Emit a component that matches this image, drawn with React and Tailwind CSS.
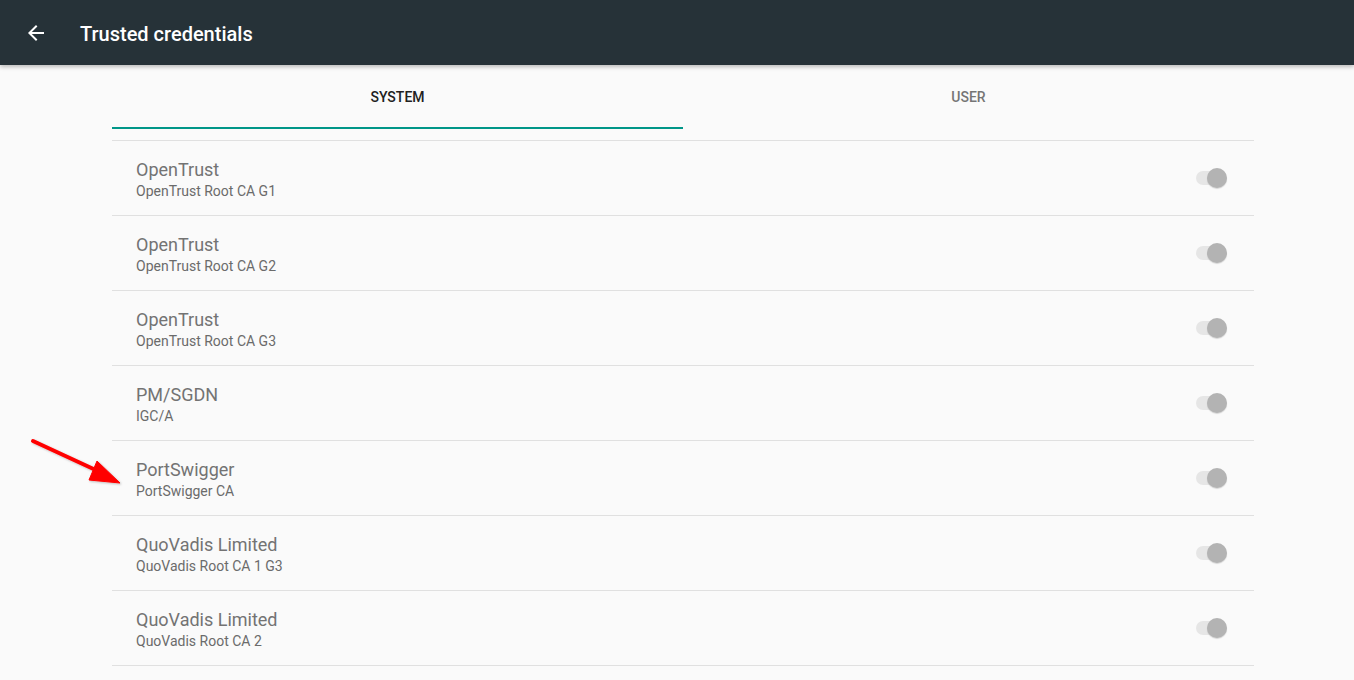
import { useState } from 'react';

const CERTS = [
  { org: 'OpenTrust', name: 'OpenTrust Root CA G1' },
  { org: 'OpenTrust', name: 'OpenTrust Root CA G2' },
  { org: 'OpenTrust', name: 'OpenTrust Root CA G3' },
  { org: 'PM/SGDN', name: 'IGC/A' },
  { org: 'PortSwigger', name: 'PortSwigger CA' },
  { org: 'QuoVadis Limited', name: 'QuoVadis Root CA 1 G3' },
  { org: 'QuoVadis Limited', name: 'QuoVadis Root CA 2' },
];

const font = { fontFamily: 'Roboto, "Noto Sans", sans-serif' };

// disabled-looking switch, thumb to the right
const Toggle = () => (
  <div className="relative w-[32px] h-[20px] flex items-center">
    <div className="ml-[1px] w-[26px] h-[14px] rounded-full bg-[#e6e6e6]" />
    <div className="absolute right-0 top-0 w-[20px] h-[20px] rounded-full bg-[#b3b3b3] shadow-[0_1px_1px_rgba(0,0,0,0.15)]" />
  </div>
);

const CertRow = ({ org, name }) => (
  <div className="flex items-center border-b border-[#e0e0e0] pl-[24px] pr-[27px]">
    <div className="flex-1 pt-[19px] pb-[14px]">
      <p className="text-[18px] leading-[20px] text-[#737373]">{org}</p>
      <p className="pt-[1px] text-[14px] leading-[20px] text-[#6b6b6b]">{name}</p>
    </div>
    <Toggle />
  </div>
);

const App = () => {
  const [tab, setTab] = useState('system');

  return (
    <div className="relative w-[1354px] h-[680px] overflow-hidden bg-[#fafafa]" style={font}>
      {/* Toolbar */}
      <div className="relative z-10 h-[65px] bg-[#263238] flex items-center shadow-[0_2px_4px_rgba(0,0,0,0.25)]">
        <svg className="ml-[24px]" width="24" height="24" viewBox="0 0 24 24" fill="#ffffff">
          <path d="M20 11H7.83l5.59-5.59L12 4l-8 8 8 8 1.41-1.41L7.83 13H20v-2z" />
        </svg>
        <h1 className="ml-[32px] mt-[2px] text-[20px] font-medium text-white">Trusted credentials</h1>
      </div>

      <div className="ml-[112px] mr-[100px]">
        {/* Tabs */}
        <div className="flex h-[64px]">
          {['system', 'user'].map((t) => (
            <button
              key={t}
              onClick={() => setTab(t)}
              className={`flex-1 flex items-center justify-center border-b-2 text-[14px] font-medium uppercase ${
                tab === t ? 'border-[#009688] text-[#212121]' : 'border-transparent text-[#757575]'
              }`}
            >
              <span className="mt-[3px]">{t}</span>
            </button>
          ))}
        </div>

        {/* Certificate list */}
        <div className="mt-[11px] border-t border-[#e0e0e0]">
          {CERTS.map((c) => (
            <CertRow key={c.name} {...c} />
          ))}
        </div>
      </div>

      {/* Annotation arrow */}
      <svg className="absolute left-0 top-0 pointer-events-none" width="140" height="500" viewBox="0 0 140 500">
        <defs>
          <filter id="arrowShadow" x="-20%" y="-20%" width="140%" height="140%">
            <feDropShadow dx="1" dy="1" stdDeviation="1" floodColor="#000" floodOpacity="0.25" />
          </filter>
        </defs>
        <g filter="url(#arrowShadow)" fill="#ff0000" stroke="#ff0000">
          <line x1="33" y1="441" x2="100" y2="472" strokeWidth="4" strokeLinecap="round" />
          <polygon points="120,483 97,461 89,480" strokeWidth="1" strokeLinejoin="round" />
        </g>
      </svg>
    </div>
  );
};

export default App;
